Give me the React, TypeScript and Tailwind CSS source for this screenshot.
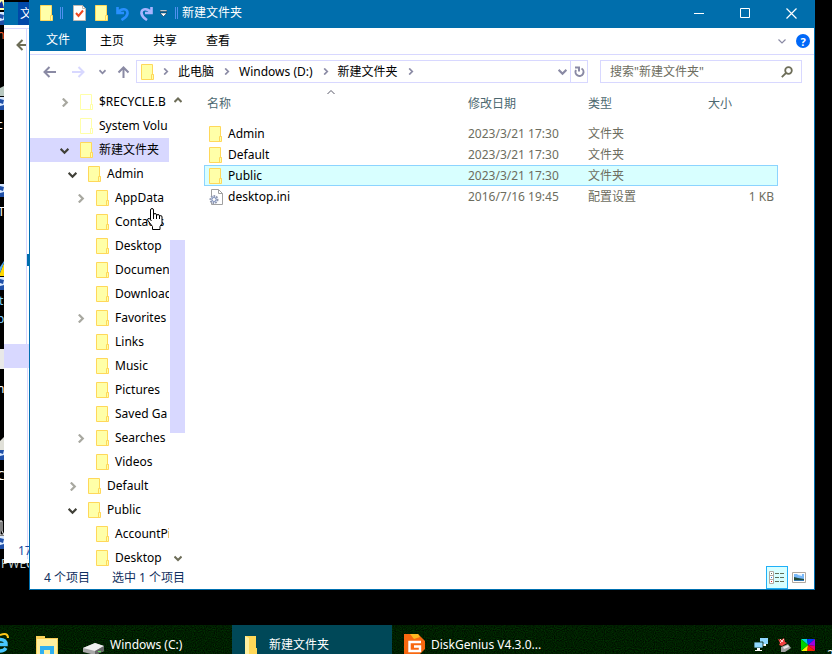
import type { ReactNode } from "react";
import clsx from "clsx";

type TreeNode = {
  name: string;
  level: 0 | 1 | 2;
  state?: "open" | "closed";
  selected?: boolean;
  faded?: boolean;
};

const tree: TreeNode[] = [
  { name: "$RECYCLE.B", level: 0, state: "closed", faded: true },
  { name: "System Volu", level: 0, faded: true },
  { name: "新建文件夹", level: 0, state: "open", selected: true },
  { name: "Admin", level: 1, state: "open" },
  { name: "AppData", level: 2, state: "closed" },
  { name: "Contacts", level: 2 },
  { name: "Desktop", level: 2 },
  { name: "Documents", level: 2 },
  { name: "Downloads", level: 2 },
  { name: "Favorites", level: 2, state: "closed" },
  { name: "Links", level: 2 },
  { name: "Music", level: 2 },
  { name: "Pictures", level: 2 },
  { name: "Saved Ga", level: 2 },
  { name: "Searches", level: 2, state: "closed" },
  { name: "Videos", level: 2 },
  { name: "Default", level: 1, state: "closed" },
  { name: "Public", level: 1, state: "open" },
  { name: "AccountPi", level: 2 },
  { name: "Desktop", level: 2 },
];

const files = [
  { name: "Admin", date: "2023/3/21 17:30", type: "文件夹", size: "" },
  { name: "Default", date: "2023/3/21 17:30", type: "文件夹", size: "" },
  { name: "Public", date: "2023/3/21 17:30", type: "文件夹", size: "", selected: true },
  { name: "desktop.ini", date: "2016/7/16 19:45", type: "配置设置", size: "1 KB" },
];

const indent = ["pl-[27px]", "pl-[35px]", "pl-[43px]"];

function FolderIcon({ faded = false }: { faded?: boolean }) {
  const fill = faded ? "#ffffff" : "#ffffa8";
  const line = faded ? "#ffffa8" : "#ffd85a";
  return (
    <svg width="13" height="16" viewBox="0 0 13 16" className="shrink-0" fill={fill} stroke={line}>
      <path d="M.5.5h11v10h1v5H.5z" />
      <path d="M10.5 15.5v-5h2" fill="none" />
    </svg>
  );
}

function IniIcon() {
  return (
    <svg width="14" height="16" viewBox="0 0 14 16" className="shrink-0" fill="none">
      <path d="M2.5.5h7l4 4v11h-11z" fill="#fff" stroke="#a0a0a0" />
      <path d="M9.5.5v4h4" stroke="#a0a0a0" />
      <circle cx="5" cy="10.5" r="3.5" fill="#d8e4f8" stroke="#9098b0" strokeWidth="2" strokeDasharray="1.6 1" />
      <circle cx="5" cy="10.5" r="2" fill="#fff" stroke="#8090b8" />
    </svg>
  );
}

function Chevron({
  dir,
  color = "#8a8aa4",
  size = 8,
  weight = 2,
}: {
  dir: "up" | "down" | "right";
  color?: string;
  size?: number;
  weight?: number;
}) {
  const d = { up: "M0.5 6L4 2.5 7.5 6", down: "M0.5 2.5L4 6 7.5 2.5", right: "M2.5 .5L6 4 2.5 7.5" }[dir];
  return (
    <svg width={size} height={size} viewBox="0 0 8 8" fill="none" stroke={color} strokeWidth={weight}>
      <path d={d} />
    </svg>
  );
}

function Arrow({ color, up = false }: { color: string; up?: boolean }) {
  return (
    <svg width="13" height="12" viewBox="0 0 13 12" fill="none" stroke={color} strokeWidth="2">
      <path d={up ? "M6.5 12V1.5M1.5 6.5l5-5 5 5" : "M13 6H1.5M6.5 1l-5 5 5 5"} />
    </svg>
  );
}

function IconButton({ label, className = "", children }: { label: string; className?: string; children: ReactNode }) {
  return (
    <button type="button" aria-label={label} className={clsx("flex shrink-0 items-center justify-center", className)}>
      {children}
    </button>
  );
}

function TitleBar() {
  return (
    <header className="flex h-7 items-center bg-[#006eac] pb-0.5 pl-2.5 text-white">
      <FolderIcon />
      <span className="ml-[7px] mr-2.5 h-3 w-[3px] border-x border-[#5090f0]" />
      <IconButton label="属性">
        <svg width="13" height="16" viewBox="0 0 13 16" fill="none">
          <path d="M.5.5h9l3 3v12H.5z" fill="#fff" stroke="#c0b8b0" />
          <path d="M9.5.5v3h3" stroke="#c0b8b0" />
          <path d="M3 8l2.5 3L10 5.5" stroke="#f04820" strokeWidth="2" />
        </svg>
      </IconButton>
      <IconButton label="新建文件夹" className="ml-[9px]">
        <FolderIcon />
      </IconButton>
      <IconButton label="撤消" className="ml-2">
        <svg width="14" height="15" viewBox="0 0 14 15" fill="none" stroke="#2890ff" strokeWidth="2.6">
          <path d="M1.5 1v6H8M2 6.500C5 2 12 2 11.500 7.500 11 11 8.500 12 5.500 14" />
        </svg>
      </IconButton>
      <IconButton label="恢复" className="ml-[9px]">
        <svg width="14" height="15" viewBox="0 0 14 15" fill="none" stroke="#a8b4ff" strokeWidth="2.6">
          <path d="M12.5 1v6H6M12 6.500C9 2 2 2 2.500 7.500 3 11 5 12 8 14" />
        </svg>
      </IconButton>
      <IconButton label="自定义快速访问工具栏" className="ml-[7px]">
        <svg width="7" height="7" viewBox="0 0 7 7" fill="#fff" stroke="#001830" strokeWidth=".5">
          <path d="M0 0h7v1.5H0zM0 3h7L3.5 6.5z" />
        </svg>
      </IconButton>
      <span className="ml-2 mr-1 h-3 w-[3px] border-x border-[#5090f0]" />
      <h1>新建文件夹</h1>
      <div className="ml-auto flex">
        <IconButton label="最小化" className="h-6 w-[46px]">
          <svg width="10" height="10"><path d="M0 5.500h10" stroke="#fff" /></svg>
        </IconButton>
        <IconButton label="最大化" className="h-6 w-[46px]">
          <svg width="10" height="10"><path d="M.5.5h9v9h-9z" fill="none" stroke="#fff" /></svg>
        </IconButton>
        <IconButton label="关闭" className="h-6 w-[46px]">
          <svg width="11" height="11"><path d="M.5.5l10 10M10.500.5l-10 10" stroke="#fff" strokeWidth="1.2" /></svg>
        </IconButton>
      </div>
    </header>
  );
}

function RibbonTabs() {
  return (
    <nav className="flex h-[27px] border-b border-[#d8d8ff]">
      <button type="button" className="h-[23px] w-14 bg-[#006eac] text-white">文件</button>
      <div className="ml-3.5 flex gap-[29px] text-black">
        <button type="button">主页</button>
        <button type="button">共享</button>
        <button type="button">查看</button>
      </div>
      <IconButton label="展开功能区" className="ml-auto">
        <Chevron dir="down" weight={1.2} />
      </IconButton>
      <IconButton label="帮助" className="ml-2.5 mr-1">
        <span className="flex size-3.5 items-center justify-center rounded-full bg-[#0068f8] text-[11px] font-bold leading-none text-white">?</span>
      </IconButton>
    </nav>
  );
}

function AddressRow() {
  return (
    <div className="flex pb-[7px] pl-[13px] pr-3 pt-[5px]">
      <IconButton label="后退"><Arrow color="#8a8aa4" /></IconButton>
      <IconButton label="前进" className="ml-4">
        <span className="rotate-180"><Arrow color="#d8d8ff" /></span>
      </IconButton>
      <IconButton label="最近浏览的位置" className="ml-3.5"><Chevron dir="down" size={7} /></IconButton>
      <IconButton label="上移" className="ml-[11px]"><Arrow up color="#8a8aa4" /></IconButton>
      <div className="ml-1.5 flex h-[23px] min-w-0 flex-1 items-center border border-[#d8d8ff] pl-1 text-black">
        <FolderIcon />
        <div className="ml-2 flex items-center gap-[9px] whitespace-nowrap">
          <Chevron dir="right" size={7} />
          <button type="button">此电脑</button>
          <Chevron dir="right" size={7} />
          <button type="button">Windows (D:)</button>
          <Chevron dir="right" size={7} />
          <button type="button">新建文件夹</button>
          <Chevron dir="right" size={7} />
        </div>
        <IconButton label="以前的位置" className="ml-auto mr-[3px]"><Chevron dir="down" size={9} /></IconButton>
        <IconButton label="刷新" className="h-full w-[17px] border-l border-[#d8d8ff]">
          <svg width="11" height="12" viewBox="0 0 11 12" fill="none" stroke="#8a8aa4" strokeWidth="2">
            <path d="M7.500 2.500A4 4 0 1 1 2 4M1 1.500h4v4" />
          </svg>
        </IconButton>
      </div>
      <div className="ml-3 flex h-[23px] w-[202px] items-center border border-[#d8d8ff] pl-[9px] pr-2">
        <input
          type="search"
          aria-label="搜索"
          placeholder={'搜索"新建文件夹"'}
          className="min-w-0 flex-1 outline-none placeholder:text-[#6d6d60]"
        />
        <svg width="12" height="12" viewBox="0 0 12 12" fill="none" stroke="#6d6d58" strokeWidth="1.8">
          <circle cx="7.5" cy="4.5" r="3.3" />
          <path d="M5 7L.8 11.2" />
        </svg>
      </div>
    </div>
  );
}

function TreeRow({ node }: { node: TreeNode }) {
  return (
    <li className={clsx("flex h-6 items-center whitespace-nowrap", indent[node.level], node.selected && "bg-[#d8d8ff]")}>
      {node.state ? (
        <IconButton label={node.name} className="w-3.5">
          <Chevron
            dir={node.state === "open" ? "down" : "right"}
            color={node.state === "open" ? "#404038" : "#a8a8a0"}
            size={9}
          />
        </IconButton>
      ) : (
        <span className="w-3.5 shrink-0" />
      )}
      <button type="button" className="ml-[9px] flex items-center gap-1.5">
        <FolderIcon faded={node.faded} />
        {node.name}
      </button>
    </li>
  );
}

function NavigationPane() {
  return (
    <aside className="flex text-black">
      <ul className="w-[139px] overflow-hidden">
        {tree.map((node, i) => (
          <TreeRow key={i} node={node} />
        ))}
      </ul>
      <div className="ml-px flex w-[15px] flex-col">
        <IconButton label="向上滚动" className="h-5"><Chevron dir="up" color="#6d6d58" /></IconButton>
        <div className="mt-[130px] h-[193px] bg-[#d8d8ff]" />
        <IconButton label="向下滚动" className="mt-auto h-6"><Chevron dir="down" color="#6d6d58" /></IconButton>
      </div>
    </aside>
  );
}

function FileList() {
  return (
    <main className="ml-[19px] min-w-0 flex-1">
      <table className="w-[574px] table-fixed border-collapse text-left text-[#6d6d60]">
        <thead className="text-[#4c6870]">
          <tr className="h-[33px] align-top leading-7">
            <th className="relative w-[264px] pl-[3px] font-normal">
              名称
              <span className="absolute -top-0.5 left-[123px] leading-none">
                <Chevron dir="up" color="#585868" weight={1} />
              </span>
            </th>
            <th className="w-[120px] font-normal">修改日期</th>
            <th className="w-[120px] font-normal">类型</th>
            <th className="font-normal">大小</th>
          </tr>
        </thead>
        <tbody>
          {files.map((file) => (
            <tr
              key={file.name}
              className={clsx("h-[21px]", file.selected && "bg-[#d8ffff] outline-1 -outline-offset-1 outline-[#8cd4ff]")}
            >
              <td className="pl-[5px] text-black">
                <span className="flex items-center">
                  <span className="w-[19px]">{file.name.endsWith(".ini") ? <IniIcon /> : <FolderIcon />}</span>
                  {file.name}
                </span>
              </td>
              <td>{file.date}</td>
              <td>{file.type}</td>
              <td className="pr-1 text-right">{file.size}</td>
            </tr>
          ))}
        </tbody>
      </table>
    </main>
  );
}

function StatusBar() {
  return (
    <footer className="flex h-[19px] items-end pl-3.5 pr-2 text-[#103060]">
      <span className="mb-[3px]">4 个项目</span>
      <span className="mb-[3px] ml-[22px]">选中 1 个项目</span>
      <div className="ml-auto flex items-center gap-1">
        <IconButton label="详细信息" className="h-[23px] w-[22px] border border-[#20b0f8] bg-[#d8ffff]">
          <svg width="16" height="13" viewBox="0 0 16 13">
            <path d="M.5.5h4v12h-4zM.5 4.500h4M.5 8.500h4" fill="#fff" stroke="#b0a8a0" />
            <path d="M6 2.500h4M11 2.500h4M6 6.500h4M11 6.500h4M6 10.500h4M11 10.500h4" stroke="#607058" />
            <path d="M2 2h1v1H2z" fill="#607058" />
            <path d="M2 6h1v1H2z" fill="#2080e0" />
            <path d="M2 10h1v1H2z" fill="#e02020" />
          </svg>
        </IconButton>
        <IconButton label="大缩略图">
          <svg width="14" height="11" viewBox="0 0 14 11">
            <path d="M.5.5h13v10H.5z" fill="#fff" stroke="#b0a8a0" />
            <path d="M2 2h10v7H2z" fill="#78b8f8" />
            <path d="M2 5l4 1 6 1v1H2z" fill="#204838" />
            <path d="M5 2h5v2L6 3z" fill="#e8f4ff" />
            <path d="M2 8h10v1H2z" fill="#3878b0" />
          </svg>
        </IconButton>
      </div>
    </footer>
  );
}

function BackWindow() {
  return (
    <section className="absolute left-1 right-20 top-0.5 bg-white pb-1">
      <div className="flex h-[23px] bg-[#006eac]">
        <button type="button" className="ml-3.5 w-14 whitespace-nowrap bg-[#0048a8] pl-0.5 text-left text-white">
          文
        </button>
      </div>
      <div className="h-1 border-b border-[#d8d8ff]" />
      <div className="flex h-[315px]">
        <div className="w-[23px] overflow-hidden border-r border-[#d8d8ff] pl-3 pt-2.5">
          <Arrow color="#6d6d58" />
        </div>
        <div className="mt-[225px] h-3 w-1 bg-[#006eac]" />
      </div>
      <div className="h-6 bg-[#d8d8ff]" />
      <div className="flex h-[191px] w-[24px] items-end border-r border-[#d8d8ff] pl-3.5 text-[#1848a0]">17</div>
    </section>
  );
}

// The left-most column of shortcuts, almost wholly behind the windows
function DesktopIcons() {
  return (
    <svg width="30" height="580" className="absolute left-0 top-0 text-[12px]" fill="#fff">
      {[12, 97, 184, 277, 447, 536].map((y) => (
        <g key={y}>
          <path d={`M0 ${y}h4v13H0z`} fill="#d8e8ff" />
          <path d={`M0 ${y + 2}l4 1-1 4-3-1zM0 ${y + 9}l4-1v5H0z`} fill="#2050a8" />
        </g>
      ))}
      <path d="M0 0h4v10H0z" fill="#ffffa8" />
      <path d="M0 3l2-2 2 7H0z" fill="#1030a0" />
      <path d="M0 88l4-2v10H0z" fill="#b8c8c0" />
      <path d="M0 273l4-10v13H0z" fill="#ffd800" />
      <path d="M0 267l4-6v2l-4 10z" fill="#50a8f0" />
      <path d="M0 349h4v20H0z" fill="#e8e8e8" />
      <path d="M0 441l4-4v13H0z" fill="#e0e0d8" />
      <path d="M0 521h2v10l2 4H0z" fill="none" stroke="#fff" />
      <text x="-3" y="39" fill="#f06030">n</text>
      <text x="-3" y="129">c</text>
      <text x="-2" y="216">T</text>
      <text x="-1" y="305" fill="#80d0ff">t</text>
      <text x="-3" y="323" fill="#80d0ff">p</text>
      <text x="-3" y="393">n</text>
      <text x="-3" y="480">C</text>
      <text x="1" y="568" fill="#c0d0d0">PWEC</text>
    </svg>
  );
}

function HandCursor() {
  return (
    <svg width="17" height="22" viewBox="0 0 17 22" className="absolute left-[147px] top-[208px]" fill="#fff" stroke="#000">
      <path d="M3.500 11.500V2q0-1.500 1.500-1.500T6.500 2v5q0-1.500 1.500-1.500T9.500 7v1q0-1.500 1.500-1.500T12.500 8v1q0-1.500 1.200-1.500T15 9v6.500l-2 3v3H5.500v-3l-5-6.500q0-2 2-1.500l2 2.500" />
      <path d="M6.500 6v5M9.500 7.500V11M12.500 8.500V11" fill="none" />
    </svg>
  );
}

function TaskButton({ active = false, className = "", icon, label }: { active?: boolean; className?: string; icon: ReactNode; label: string }) {
  return (
    <button type="button" className={clsx("flex h-full w-40 items-center whitespace-nowrap text-white", active && "bg-[#004858]", className)}>
      <span className="flex shrink-0">{icon}</span>
      {label}
    </button>
  );
}

function Taskbar() {
  return (
    <div className="relative -mb-[11px] mt-auto flex h-10 shrink-0 items-center bg-[#001c00]">
      <svg className="absolute inset-0 size-full">
        <filter id="grain" colorInterpolationFilters="sRGB">
          <feTurbulence type="fractalNoise" baseFrequency="0.9" numOctaves="1" />
          <feColorMatrix values="0 0 0 0 0  0 0.3 0 0 -0.03  0 0 0 0 0  0 0 0 0 1" />
        </filter>
        <rect width="100%" height="100%" filter="url(#grain)" />
      </svg>
      <div className="relative flex h-full min-w-0 flex-1 items-center">
        <IconButton label="Internet Explorer">
          <svg width="10" height="26" viewBox="0 0 10 26" fill="none">
            <path d="M0 7.500q6 0 6 5H0M0 19q4 0 6-3" stroke="#48c8ff" strokeWidth="3.5" />
            <path d="M0 3q8-3 8 3" stroke="#ffc818" strokeWidth="2" />
          </svg>
        </IconButton>
        <IconButton label="文件资源管理器" className="ml-[26px]">
          <svg width="22" height="18" viewBox="0 0 22 18">
            <path d="M0 0h9v2h13v16H0z" fill="#f8d058" />
            <path d="M1 3h20v15H1z" fill="#fff0a0" />
            <path d="M4 18v-8h14v8h-4v-4H8v4z" fill="#30b0f0" />
          </svg>
        </IconButton>
        <TaskButton
          className="ml-[14px] gap-1.5 pl-[11px]"
          label="Windows (C:)"
          icon={
            <svg width="21" height="12" viewBox="0 0 21 12" className="mt-2">
              <path d="M0 5l12-5 9 3v5l-9 4-12-3z" fill="#a8a8a8" />
              <path d="M0 5l12-5 9 3-9 5z" fill="#f0f0f0" />
              <path d="M12 8l9-5v5l-9 4z" fill="#686868" />
              <path d="M15 8h3v1h-3z" fill="#60e060" />
            </svg>
          }
        />
        <TaskButton
          active
          className="gap-2.5 pl-3"
          label="新建文件夹"
          icon={
            <svg width="15" height="18" viewBox="0 0 15 18">
              <path d="M1 0h11v12h1v6H1z" fill="#ffd858" />
              <path d="M1 0l4 2v16H1z" fill="#fff0a0" />
            </svg>
          }
        />
        <TaskButton
          className="ml-3 gap-1.5"
          label="DiskGenius V4.3.0..."
          icon={
            <svg width="21" height="22" viewBox="0 0 21 22" fill="none">
              <path d="M0 0h14l7 7v8l-7 7H0z" fill="#f86810" />
              <path d="M6 0h8l2 3-6 2z" fill="#ffb820" />
              <path d="M17 8H5.500v9H16v-4.500h-6" stroke="#fff" strokeWidth="2.4" />
            </svg>
          }
        />
      </div>
      <div className="relative flex items-center gap-2.5">
        <IconButton label="网络">
          <svg width="14" height="14" viewBox="0 0 14 14">
            <path d="M6 0h8v6H6z" fill="#90d8ff" />
            <path d="M9 6h3v2H9z" fill="#fff" />
            <path d="M0 4h9v6H0z" fill="#90d8ff" stroke="#002000" strokeWidth=".8" />
            <path d="M3 10h3v2h2v1H1v-1h2z" fill="#fff" />
          </svg>
        </IconButton>
        <IconButton label="音量">
          <svg width="13" height="14" viewBox="0 0 13 14">
            <path d="M0 1l3 1 3-2 1 4 2 1-5 3-3-1 1-2z" fill="#f04040" />
            <path d="M2 1l3 3M6 1L2 5" stroke="#ffd0d0" />
            <path d="M3 9l7-3 3 4-6 4H3z" fill="#a0a0a0" />
            <path d="M5 9l5-2 1 2-5 2z" fill="#e8e8e8" />
          </svg>
        </IconButton>
        <IconButton label="颜色">
          <svg width="14" height="12" viewBox="0 0 14 12">
            <path d="M7 6L0 0h6z" fill="#00d8d8" />
            <path d="M7 6L6 0h8z" fill="#0038f8" />
            <path d="M7 6l7-6v7z" fill="#a000e0" />
            <path d="M7 6l7 1v5z" fill="#f00060" />
            <path d="M7 6l7 6H6z" fill="#f82000" />
            <path d="M7 6L6 12H0z" fill="#f8f000" />
            <path d="M7 6L0 12V0z" fill="#00d000" />
          </svg>
        </IconButton>
        <time className="ml-0.5 mt-5 h-4 w-[5px] overflow-hidden text-white">2</time>
      </div>
    </div>
  );
}

export default function App() {
  return (
    <div className="relative flex h-screen flex-col overflow-hidden bg-black font-['Noto_Sans','Noto_Sans_CJK_SC',sans-serif] text-[12px] leading-4">
      <DesktopIcons />
      <BackWindow />
      <section className="absolute left-[29px] right-[17px] top-0 border-b border-l border-r border-[#0070b0] bg-white">
        <TitleBar />
        <RibbonTabs />
        <AddressRow />
        <div className="flex">
          <NavigationPane />
          <FileList />
        </div>
        <StatusBar />
      </section>
      <HandCursor />
      <Taskbar />
    </div>
  );
}
